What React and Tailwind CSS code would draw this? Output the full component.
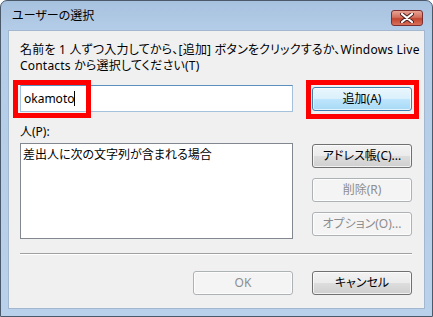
import React from "react";

const FONT = {
  fontFamily: '"Noto Sans", "Noto Sans CJK JP", sans-serif',
};

function Button({ children, disabled, primary, className = "" }) {
  let look =
    "border-[#707070] text-black bg-[linear-gradient(to_bottom,#f2f2f2_0%,#ebebeb_50%,#dddddd_51%,#cfcfcf_100%)]";
  if (primary)
    look =
      "border-[#3c7fb1] text-black bg-[linear-gradient(to_bottom,#eaf6fd_0%,#d9f0fc_50%,#bee6fd_51%,#a7d9f5_100%)] shadow-[inset_0_0_0_1px_#e5f4fc]";
  if (disabled) look = "border-[#adb2b5] text-[#8d8d8d] bg-[#f4f4f4]";
  return (
    <div
      className={`w-[100px] h-[24px] rounded-[3px] border flex items-center justify-center text-[12px] [font-feature-settings:'palt'] shadow-[inset_0_0_0_1px_rgba(255,255,255,0.7)] ${look} ${className}`}
    >
      {children}
    </div>
  );
}

export default function App() {
  return (
    <div
      className="relative w-[433px] h-[317px] flex flex-col rounded-t-[7px] border border-[#4a5a6a] bg-[linear-gradient(to_bottom,#a7c2df_0px,#b4cde8_30px,#b9d1ea_100%)] overflow-hidden"
      style={FONT}
    >
      {/* title bar */}
      <div className="h-[29px] flex items-start justify-between pl-[11px] pr-[9px]">
        <div className="mt-[7px] text-[12px] leading-[16px] text-black [font-feature-settings:'palt']">
          ユーザーの選択
        </div>
        <div className="mt-[9px] w-[32px] h-[16px] rounded-[3px] border border-[#7a3030] bg-[linear-gradient(to_bottom,#e8a493_0%,#d36f5e_45%,#c24530_55%,#d8705a_100%)] flex items-center justify-center">
          <svg width="14" height="10" viewBox="0 0 14 10">
            <path
              d="M2 1 L12 9 M12 1 L2 9"
              stroke="#4a2020"
              strokeWidth="4"
              strokeLinecap="round"
            />
            <path
              d="M2 1 L12 9 M12 1 L2 9"
              stroke="#ffffff"
              strokeWidth="2.2"
              strokeLinecap="round"
            />
          </svg>
        </div>
      </div>

      {/* content */}
      <div className="flex-1 px-[7px] pb-[7px]">
        <div className="h-full bg-[#f0f0f0] border border-[#a3b8cf] pt-[11px] pl-[11px] pr-[12px] flex flex-col text-[12px] text-black [font-feature-settings:'palt']">
          <div className="leading-[16px] whitespace-nowrap tracking-[0.2px]">
            名前を 1 人ずつ入力してから、[追加] ボタンをクリックするか、Windows Live
            <br />
            Contacts から選択してください(T)
          </div>

          <div className="mt-[11px] flex items-start">
            <div className="w-[273px] h-[27px] bg-white border border-[#a4c2dd] border-t-[#5d8fbd] flex items-center pl-[3px] text-[12px]">
              <span>okamoto</span>
              <span className="inline-block w-px h-[15px] bg-black" />
            </div>
            <Button primary className="ml-[19px] mt-[2px]">
              追加(A)
            </Button>
          </div>

          <div className="mt-[12px] leading-[16px]">人(P):</div>

          <div className="mt-[3px] flex items-start">
            <div className="w-[273px] h-[96px] bg-white border border-[#828790] pl-[2px] pt-[3px] leading-[16px]">
              差出人に次の文字列が含まれる場合
            </div>
            <div className="ml-[19px] mt-[1px] flex flex-col gap-[10px]">
              <Button>アドレス帳(C)...</Button>
              <Button disabled>削除(R)</Button>
              <Button disabled>オプション(O)...</Button>
            </div>
          </div>

          <div className="mt-[14px] h-[2px] border-t border-[#a0a0a0] border-b border-b-white" />

          <div className="mt-[16px] flex justify-end gap-[19px]">
            <Button disabled>OK</Button>
            <Button>キャンセル</Button>
          </div>
        </div>
      </div>

      {/* annotation boxes */}
      <div className="absolute left-[12px] top-[79px] w-[78px] h-[38px] border-[5px] border-[#ff0000]" />
      <div className="absolute left-[305px] top-[79px] w-[113px] h-[39px] border-[5px] border-[#ff0000]" />
    </div>
  );
}
